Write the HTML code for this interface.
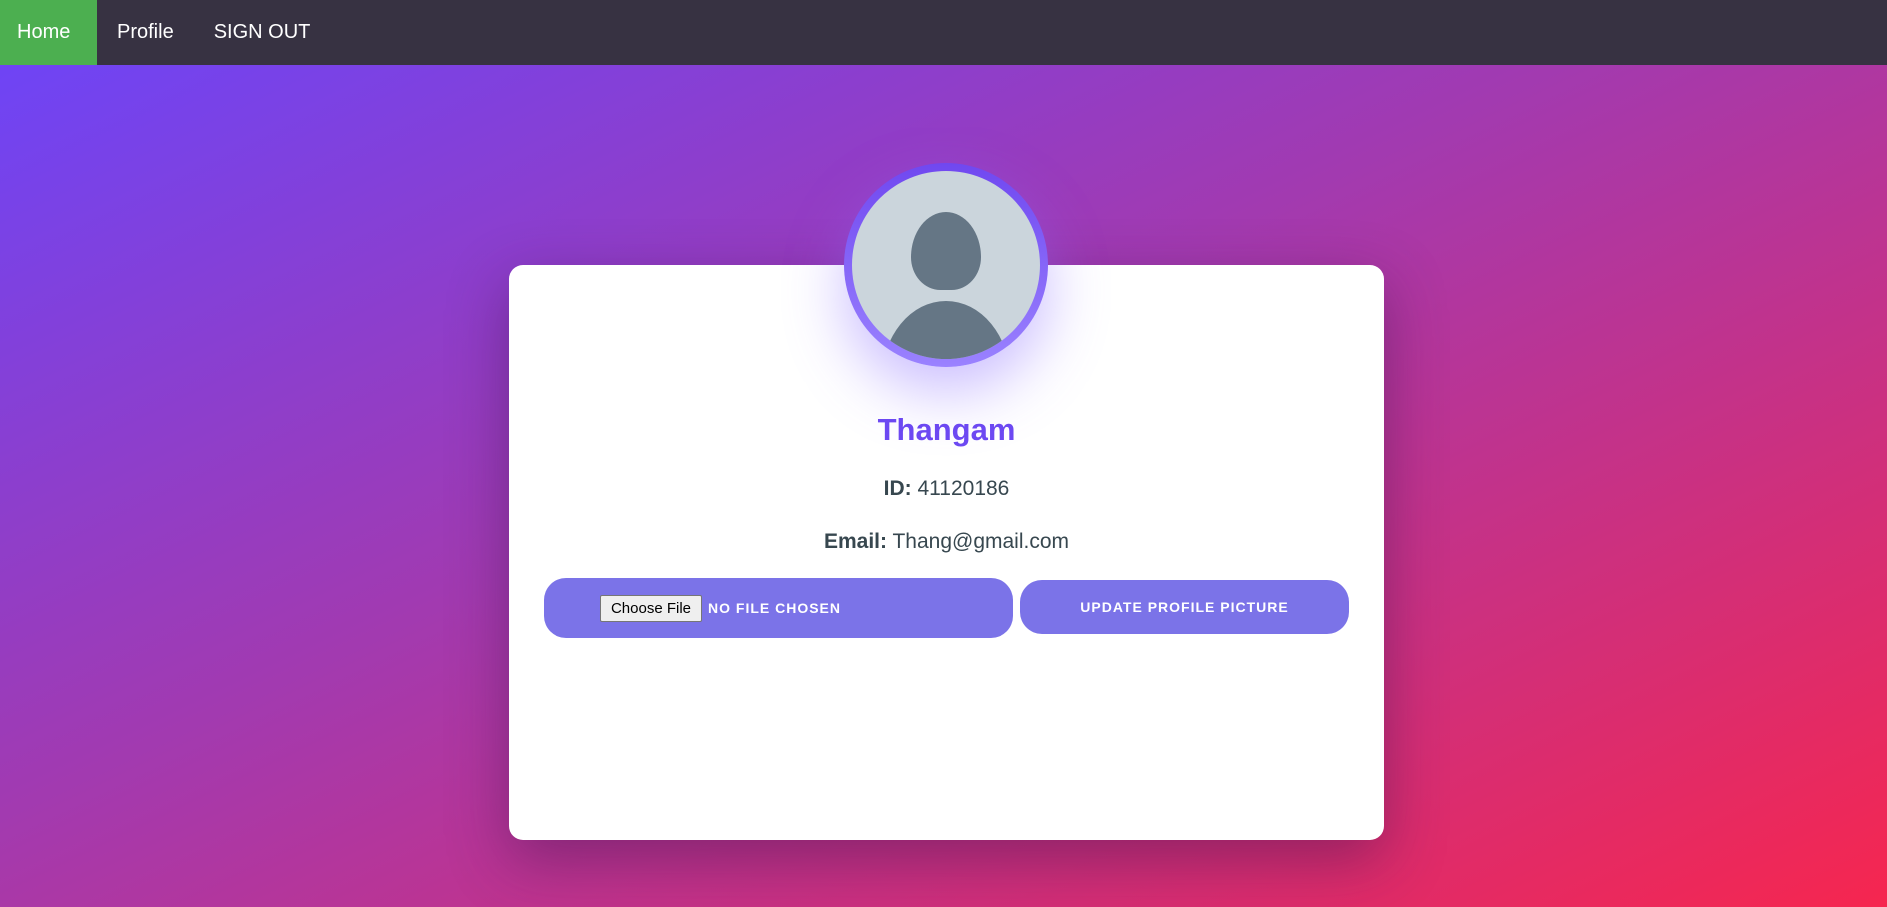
<!DOCTYPE html>
<html><head><style>
*{box-sizing:border-box;margin:0;padding:0}
body{width:1887px;height:907px;overflow:hidden;font-family:"Liberation Sans",sans-serif;background:linear-gradient(to bottom right,#6a45fb 0%,#a23ab0 45%,#f6264f 100%);position:relative}
nav{height:65px;background:#373242;display:flex;align-items:center}
nav a{color:#fff;font-size:20px;text-decoration:none;height:65px;line-height:65px;padding:0 20px}
nav a.home{background:#4caf50;width:97px;padding:0 17px}
.card{position:absolute;left:509px;top:265px;width:875px;height:575px;background:#fff;border-radius:14px;box-shadow:0 20px 60px rgba(60,20,80,.45)}
.av{position:absolute;left:844px;top:163px;width:204px;height:204px;border-radius:50%;background:linear-gradient(#7048f0,#9a82ff);padding:8px;box-shadow:0 25px 60px rgba(140,110,255,.45)}
.av .in{width:188px;height:188px;border-radius:50%;background:#cbd5dc;overflow:hidden;position:relative}
.head{position:absolute;left:59px;top:41px;width:70px;height:78px;background:#657685;border-radius:50% 50% 42% 42%/58% 58% 42% 42%}
.body{position:absolute;left:30px;top:130px;width:128px;height:130px;background:#657685;border-radius:50% 50% 0 0/60% 60% 0 0}
.t{position:absolute;left:509px;width:875px;text-align:center;color:#37474f}
.name{top:412px;font-size:31px;font-weight:bold;color:#6c48f2}
.id{top:477px;font-size:21px}
.em{top:530px;font-size:21px}
.file{position:absolute;left:544px;top:578px;width:469px;height:60px;background:#7b73e8;border-radius:22px}
.cf{position:absolute;left:56px;top:17px;width:102px;height:27px;background:#efefef;border:1px solid #767676;border-radius:2px;font-size:15px;text-align:center;line-height:25px;color:#000}
.nf{position:absolute;left:164px;top:22px;color:#fff;font-weight:bold;font-size:14px;letter-spacing:1px}
.up{position:absolute;left:1020px;top:580px;width:329px;height:54px;background:#7b73e8;border-radius:22px;color:#fff;font-weight:bold;font-size:14px;letter-spacing:1px;text-align:center;line-height:54px}
</style></head><body>
<nav><a class="home">Home</a><a>Profile</a><a>SIGN OUT</a></nav>
<div class="card"></div>
<div class="av"><div class="in"><div class="head"></div><div class="body"></div></div></div>
<div class="t name">Thangam</div>
<div class="t id"><b>ID:</b> 41120186</div>
<div class="t em"><b>Email:</b> Thang@gmail.com</div>
<div class="file"><div class="cf">Choose File</div><div class="nf">NO FILE CHOSEN</div></div>
<div class="up">UPDATE PROFILE PICTURE</div>
</body></html>
